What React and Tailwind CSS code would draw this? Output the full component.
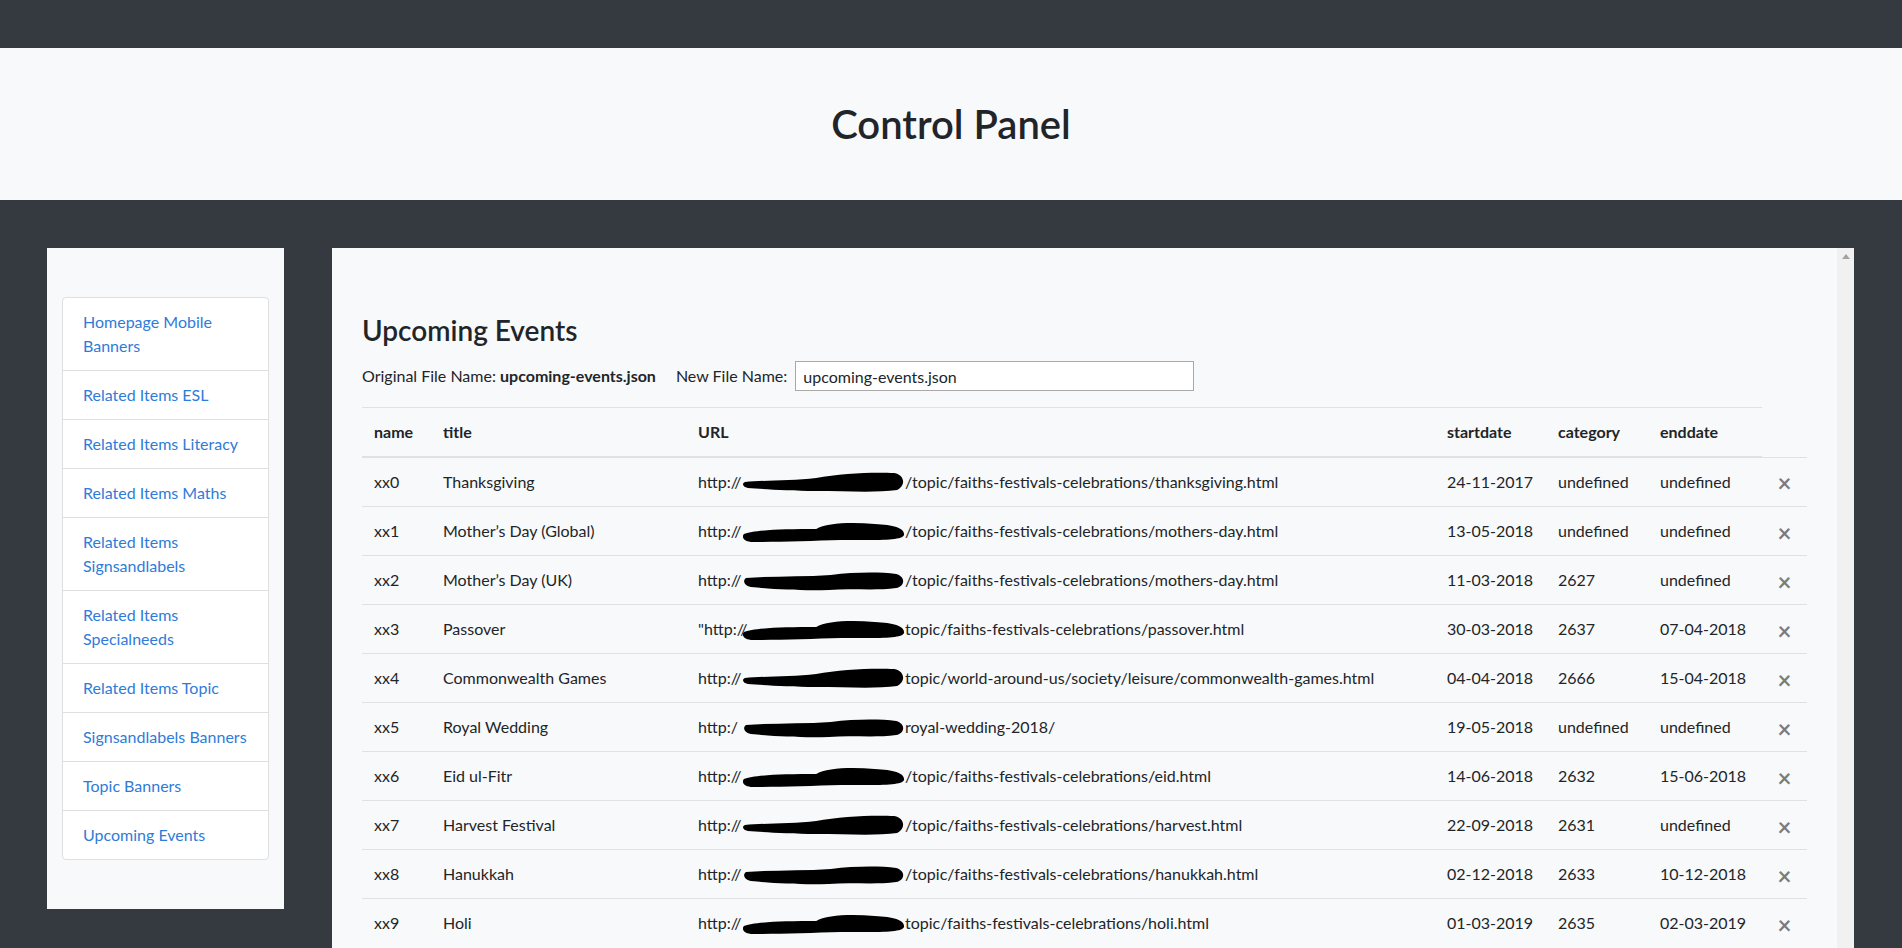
import React from "react";

const menu = [
  ["Homepage Mobile", "Banners"],
  ["Related Items ESL"],
  ["Related Items Literacy"],
  ["Related Items Maths"],
  ["Related Items", "Signsandlabels"],
  ["Related Items", "Specialneeds"],
  ["Related Items Topic"],
  ["Signsandlabels Banners"],
  ["Topic Banners"],
  ["Upcoming Events"],
];

const rows = [
  ["xx0", "Thanksgiving", "http://", "/topic/faiths-festivals-celebrations/thanksgiving.html", "24-11-2017", "undefined", "undefined", 0],
  ["xx1", "Mother’s Day (Global)", "http://", "/topic/faiths-festivals-celebrations/mothers-day.html", "13-05-2018", "undefined", "undefined", 1],
  ["xx2", "Mother’s Day (UK)", "http://", "/topic/faiths-festivals-celebrations/mothers-day.html", "11-03-2018", "2627", "undefined", 2],
  ["xx3", "Passover", "\"http://", "topic/faiths-festivals-celebrations/passover.html", "30-03-2018", "2637", "07-04-2018", 1],
  ["xx4", "Commonwealth Games", "http://", "topic/world-around-us/society/leisure/commonwealth-games.html", "04-04-2018", "2666", "15-04-2018", 0],
  ["xx5", "Royal Wedding", "http:/", "royal-wedding-2018/", "19-05-2018", "undefined", "undefined", 2],
  ["xx6", "Eid ul-Fitr", "http://", "/topic/faiths-festivals-celebrations/eid.html", "14-06-2018", "2632", "15-06-2018", 1],
  ["xx7", "Harvest Festival", "http://", "/topic/faiths-festivals-celebrations/harvest.html", "22-09-2018", "2631", "undefined", 0],
  ["xx8", "Hanukkah", "http://", "/topic/faiths-festivals-celebrations/hanukkah.html", "02-12-2018", "2633", "10-12-2018", 2],
  ["xx9", "Holi", "http://", "topic/faiths-festivals-celebrations/holi.html", "01-03-2019", "2635", "02-03-2019", 1],
];

const blobs = [
  "M2 11 C 20 9, 50 10, 75 7 C 100 2, 135 1, 155 2 C 166 4, 167 15, 158 19 C 135 22, 105 20, 75 20 C 45 20, 20 18, 5 17 C -1 16, -1 12, 2 11 Z",
  "M1 14 C 10 10, 40 9, 75 9 C 85 3, 110 2, 135 4 C 155 5, 166 8, 165 15 C 163 21, 135 20, 100 20 C 70 21, 30 22, 8 22 C -1 21, -1 16, 1 14 Z",
  "M3 9 C 30 7, 60 8, 90 6 C 115 3, 140 3, 157 5 C 167 8, 166 17, 157 19 C 135 22, 110 19, 88 21 C 60 22, 30 20, 8 18 C 0 16, 0 11, 3 9 Z",
];

function Blob({ v }) {
  return (
    <svg
      viewBox="0 0 166 22"
      width="162"
      height="22"
      className="absolute left-[45px] top-[1px]"
      aria-hidden="true"
      preserveAspectRatio="none"
    >
      <path d={blobs[v]} fill="#000" />
    </svg>
  );
}

export default function App() {
  return (
    <div className="h-[948px] overflow-hidden flex flex-col bg-[#343a40] font-['Lato','Open_Sans',sans-serif] text-[#212529] text-base leading-6">
      <div className="h-[48px] shrink-0 bg-[#343a40]" />
      <header className="h-[152px] shrink-0 bg-[#f8f9fa] flex items-center justify-center">
        <h1 className="text-[40px] leading-[48px] font-semibold">Control Panel</h1>
      </header>
      <div className="flex-1 flex items-start gap-[48px] pl-[47px] pr-[48px] pt-[48px]">
        <aside className="w-[237px] shrink-0 bg-[#f8f9fa] px-[15px] py-[49px]">
          <ul className="bg-white border border-[#dfdfdf] rounded">
            {menu.map((lines, i) => (
              <li
                key={i}
                className={
                  "px-5 py-3 whitespace-nowrap text-[#2f7bd9] " +
                  (i > 0 ? "border-t border-[#dfdfdf]" : "")
                }
              >
                {lines.map((l, j) => (
                  <div key={j}>{l}</div>
                ))}
              </li>
            ))}
          </ul>
        </aside>
        <main className="flex-1 h-[760px] bg-[#f8f9fa] flex">
          <div className="flex-1 px-[30px] pt-[65px]">
            <h3 className="text-[28px] leading-[34px] font-semibold">Upcoming Events</h3>
            <div className="mt-[14px] h-[30px] flex items-center whitespace-nowrap">
              <span>Original File Name:&nbsp;</span>
              <span className="font-bold">upcoming-events.json</span>
              <span className="ml-[20px]">New File Name:</span>
              <input
                readOnly
                value="upcoming-events.json"
                className="ml-[8px] w-[399px] h-[30px] bg-white border border-[#a9a9a9] px-[7px] text-base text-[#212529] outline-none"
              />
            </div>
            <table className="mt-4 w-full table-fixed border-collapse">
              <colgroup>
                <col className="w-[69px]" />
                <col className="w-[255px]" />
                <col className="w-[749px]" />
                <col className="w-[111px]" />
                <col className="w-[102px]" />
                <col className="w-[114px]" />
                <col className="w-[45px]" />
              </colgroup>
              <thead>
                <tr>
                  {["name", "title", "URL", "startdate", "category", "enddate"].map((h) => (
                    <th
                      key={h}
                      className="text-left font-bold px-3 py-3 border-t border-b-2 border-[#dee2e6] align-bottom"
                    >
                      {h}
                    </th>
                  ))}
                </tr>
              </thead>
              <tbody>
                {rows.map((r) => (
                  <tr key={r[0]}>
                    <td className="px-3 py-3 border-t border-[#dee2e6]">{r[0]}</td>
                    <td className="px-3 py-3 border-t border-[#dee2e6] whitespace-nowrap">{r[1]}</td>
                    <td className="px-3 py-3 border-t border-[#dee2e6] whitespace-nowrap">
                      <span className="relative inline-block w-[207px] align-top">
                        {r[2]}
                        <Blob v={r[7]} />
                      </span>
                      {r[3]}
                    </td>
                    <td className="px-3 py-3 border-t border-[#dee2e6]">{r[4]}</td>
                    <td className="px-3 py-3 border-t border-[#dee2e6]">{r[5]}</td>
                    <td className="px-3 py-3 border-t border-[#dee2e6]">{r[6]}</td>
                    <td className="px-3 py-3 border-t border-[#dee2e6]">
                      <div className="h-6 flex items-center justify-center pt-[3px]">
                        <span className="text-2xl leading-6 font-bold text-black opacity-50">×</span>
                      </div>
                    </td>
                  </tr>
                ))}
              </tbody>
            </table>
          </div>
          <div className="w-[17px] shrink-0 bg-[#f1f1f1] flex justify-center pt-[6px]">
            <div className="w-0 h-0 border-l-[4px] border-r-[4px] border-b-[5px] border-l-transparent border-r-transparent border-b-[#a3a3a3]" />
          </div>
        </main>
      </div>
    </div>
  );
}
